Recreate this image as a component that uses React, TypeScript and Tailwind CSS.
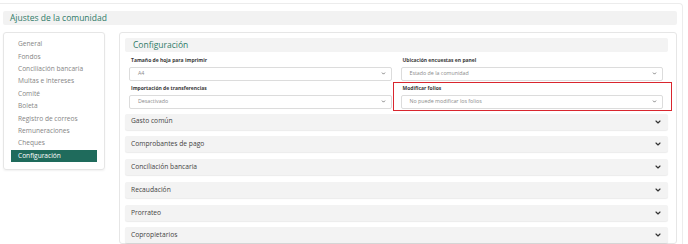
import { ChevronDown } from "lucide-react"

const menu = [
  "General",
  "Fondos",
  "Conciliación bancaria",
  "Multas e intereses",
  "Comité",
  "Boleta",
  "Registro de correos",
  "Remuneraciones",
  "Cheques",
  "Configuración",
]

const sections = [
  "Gasto común",
  "Comprobantes de pago",
  "Conciliación bancaria",
  "Recaudación",
  "Prorrateo",
  "Copropietarios",
]

function Field({ label, value }: { label: string; value: string }) {
  return (
    <div className="flex flex-col">
      <label className="h-[9px] flex items-center text-[5px] font-bold text-[#3a3a3a] pl-[2px]">{label}</label>
      <div className="mt-[1.5px] h-[13.5px] border border-[#dcdcdc] rounded-[2px] bg-white flex items-center justify-between pl-[8px] pr-[5px]">
        <span className="text-[5.3px] text-[#8a8a8a]">{value}</span>
        <ChevronDown className="w-[5px] h-[5px] text-[#555]" strokeWidth={3.5} />
      </div>
    </div>
  )
}

export default function App() {
  return (
    <div className="w-[688px] h-[244px] overflow-hidden bg-white" style={{ fontFamily: "'Open Sans', sans-serif" }}>
      <div className="mt-[3px] mr-[5px] h-[260px] border-t border-r border-[#ececec] rounded-tr-[4px] pt-[7px] pl-[3px] pr-[5px]">
        <div className="h-[14px] bg-[#f2f2f2] rounded-[2px] flex items-center pl-[7px]">
          <span className="text-[8.5px] text-[#2f7a68]">Ajustes de la comunidad</span>
        </div>
        <div className="mt-[7px] flex gap-[14px]">
          <div className="w-[102px] h-[138px] shrink-0 border border-[#e6e6e6] rounded-[3px] shadow-[0_1px_2px_rgba(0,0,0,0.06)] pt-[5px] px-[7px]">
            <ul className="flex flex-col">
              {menu.map((m) => (
                <li
                  key={m}
                  className={
                    m === "Configuración"
                      ? "h-[12.4px] flex items-center pl-[7px] bg-[#1f6b5c] text-white text-[6.6px]"
                      : "h-[12.4px] flex items-center pl-[7px] text-[#858585] text-[6.6px]"
                  }
                >
                  {m}
                </li>
              ))}
            </ul>
          </div>
          <div className="flex-1 border border-[#e6e6e6] rounded-[3px] pt-[5px] pl-[5px] pr-[8px]">
            <div className="h-[14px] bg-[#f3f3f3] rounded-[2px] flex items-center pl-[8px]">
              <span className="text-[8.5px] text-[#2f7a68]">Configuración</span>
            </div>
            <div className="grid grid-cols-2 gap-x-[9px] gap-y-[4px] mt-[4.5px] pl-[4px] pr-[5px]">
              <Field label="Tamaño de hoja para imprimir" value="A4" />
              <Field label="Ubicación encuestas en panel" value="Estado de la comunidad" />
              <Field label="Importación de transferencias" value="Desactivado" />
              <div className="relative">
                <div className="absolute -left-[8px] -right-[9px] -top-[2.5px] -bottom-[2px] border-[1.5px] border-[#d9262e]" />
                <Field label="Modificar folios" value="No puede modificar los folios" />
              </div>
            </div>
            <div className="mt-[5px] flex flex-col gap-[6.8px]">
              {sections.map((s) => (
                <div
                  key={s}
                  className="h-[16px] bg-[#f3f3f3] rounded-[2px] shadow-[0_1px_1px_rgba(0,0,0,0.08)] flex items-center justify-between pl-[6px] pr-[6px]"
                >
                  <span className="text-[6.7px] text-[#444]">{s}</span>
                  <ChevronDown className="w-[8px] h-[8px] text-[#333]" strokeWidth={3.5} />
                </div>
              ))}
            </div>
          </div>
        </div>
      </div>
    </div>
  )
}
